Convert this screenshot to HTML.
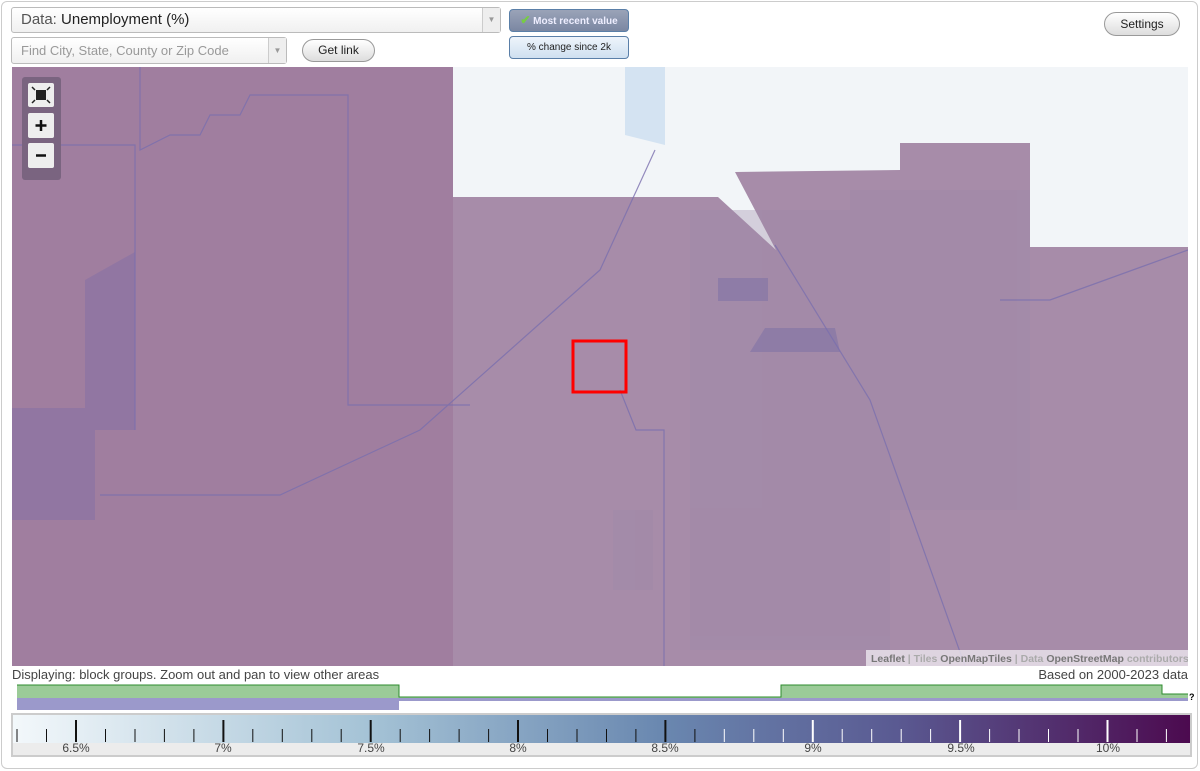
<!DOCTYPE html>
<html><head><meta charset="utf-8"><style>
*{box-sizing:border-box;margin:0;padding:0}
body{width:1200px;height:771px;background:#fff;font-family:"Liberation Sans",Arial,sans-serif;position:relative;overflow:hidden}
.frame{position:absolute;left:1px;top:1px;width:1197px;height:768px;border:1px solid #ccc;border-radius:6px}
.sel{position:absolute;border:1px solid #bbb;border-radius:3px;background:linear-gradient(#fff,#f0f0f0);color:#555}
.sel .arr{position:absolute;right:0;top:0;bottom:0;width:18px;border-left:1px solid #ccc;background:#eee;color:#999;font-size:8px;text-align:center}
.btn{position:absolute;border:1px solid #999;border-radius:12px;background:linear-gradient(#fff,#ddd);font-size:12px;text-align:center;color:#222}
.tog{position:absolute;border:1px solid #5a7fa8;border-radius:4px;font-size:10px;text-align:center}
</style></head><body>
<div class="frame"></div>
<div class="sel" style="left:11px;top:7px;width:490px;height:26px;font-size:15px;line-height:24px;padding-left:9px">Data: <span style="color:#222">Unemployment (%)</span><div class="arr" style="line-height:24px">▼</div></div>
<div class="sel" style="left:11px;top:37px;width:276px;height:27px;font-size:13px;line-height:25px;padding-left:9px;color:#999">Find City, State, County or Zip Code<div class="arr" style="line-height:25px">▼</div></div>
<div class="btn" style="left:302px;top:39px;width:73px;height:23px;line-height:21px">Get link</div>
<div class="tog" style="left:509px;top:9px;width:120px;height:23px;line-height:21px;background:linear-gradient(#9aa3b8,#7b87a2);color:#eef;font-weight:bold"><span style="color:#7c4;font-size:12px">✔</span> Most recent value</div>
<div class="tog" style="left:509px;top:36px;width:120px;height:23px;line-height:21px;background:linear-gradient(#eef4fb,#cfe0f0);color:#222">% change since 2k</div>
<div class="btn" style="left:1104px;top:12px;width:76px;height:24px;line-height:22px">Settings</div>

<svg style="position:absolute;left:12px;top:67px" width="1176" height="599" viewBox="12 67 1176 599">
<rect x="12" y="67" width="1176" height="599" fill="#a78ca9"/>
<rect x="12" y="67" width="441" height="599" fill="#a07e9f"/>
<polygon points="453,67 1188,67 1188,247 1030,247 1030,143 900,143 900,170 735,172 776,250 718,197 453,197" fill="#f2f5f8"/>
<polygon points="625,67 665,67 665,145 625,135" fill="#d4e3f2"/>
<polygon points="12,408 85,408 85,280 135,252 135,430 95,430 95,520 12,520" fill="#8a74a4" opacity=".7"/>
<rect x="718" y="278" width="50" height="23" fill="#8676a6"/>
<polygon points="750,352 765,328 835,328 840,352" fill="#8676a6"/>
<g fill="#9e89a8" opacity=".35"><rect x="690" y="210" width="200" height="440"/><rect x="850" y="190" width="180" height="320"/><rect x="613" y="510" width="40" height="80"/></g>
<g stroke="#7a6fae" stroke-width="1.2" fill="none" opacity=".8">
<path d="M140,67V150L170,135H200L210,115H240L250,95H348V405H470"/>
<path d="M12,145H135V430"/>
<path d="M655,150L600,270L420,430L280,495H100"/>
<path d="M620,390L636,430H664V666"/>
<path d="M775,245L870,400L965,666"/>
<path d="M1188,250L1050,300H1000"/>
</g>
<rect x="573" y="341" width="53" height="51" fill="none" stroke="#f00" stroke-width="3"/>
<rect x="22" y="77" width="39" height="103" rx="3" fill="#7a6480"/>
<rect x="28" y="83" width="26" height="24" rx="2" fill="#eee"/>
<rect x="36" y="90" width="10" height="10" fill="#222"/>
<path d="M32,87l3,3M50,87l-3,3M32,103l3,-3M50,103l-3,-3" stroke="#222" stroke-width="1.5"/>
<rect x="28" y="113" width="26" height="25" rx="2" fill="#eee"/>
<path d="M41,120V131M35.5,125.5H46.5" stroke="#111" stroke-width="2.5"/>
<rect x="28" y="143" width="26" height="25" rx="2" fill="#eee"/>
<path d="M36,155.5H46" stroke="#111" stroke-width="2.5"/>
<rect x="866" y="650" width="322" height="16" fill="#e8e0ea" opacity=".85"/>
<text x="871" y="662" font-size="10.5" font-family="Liberation Sans" font-weight="bold" fill="#777">Leaflet <tspan fill="#aaa">| Tiles </tspan>OpenMapTiles<tspan fill="#aaa"> | Data </tspan>OpenStreetMap<tspan fill="#aaa"> contributors</tspan></text>
</svg>

<div style="position:absolute;left:12px;top:667px;font-size:13px;color:#444">Displaying: block groups. Zoom out and pan to view other areas</div>
<div style="position:absolute;right:12px;top:667px;font-size:13px;color:#444">Based on 2000-2023 data</div>
<svg style="position:absolute;left:0;top:680px" width="1200" height="35">
<path d="M17,5H399V17H781V5H1162V14H1188V19H17Z" fill="#9bcb98"/>
<path d="M17,5H399V17H781V5H1162V14H1188" stroke="#2e8b2e" fill="none" stroke-width="1"/>
<rect x="17" y="18" width="382" height="12" fill="#9b99cb"/>
<rect x="399" y="18" width="789" height="3" fill="#9b99cb"/>
<text x="1189" y="20" font-size="9" font-weight="bold">?</text>
</svg>
<div style="position:absolute;left:11px;top:713px;width:1181px;height:44px;border:2px solid #ccc;background:#ececec"></div>
<svg style="position:absolute;left:13px;top:715px" width="1177" height="40">
<defs><linearGradient id="g"><stop offset="0" stop-color="#f3f8fb"/><stop offset=".3" stop-color="#a5c3d6"/><stop offset=".55" stop-color="#6a88b0"/><stop offset=".75" stop-color="#5a5a92"/><stop offset="1" stop-color="#4c0a4f"/></linearGradient></defs>
<rect width="1177" height="28" fill="url(#g)"/>
<path stroke="#111" stroke-width="1" d="M4,14V27M33.5,14V27M92.5,14V27M122,14V27M151.4,14V27M180.9,14V27M239.8,14V27M269.3,14V27M298.8,14V27M328.2,14V27M387.2,14V27M416.6,14V27M446.1,14V27M475.6,14V27M534.5,14V27M564,14V27M593.5,14V27M622.9,14V27M681.9,14V27"/>
<path stroke="#111" stroke-width="2" d="M63,5V27M210.4,5V27M357.7,5V27M505,5V27M652.4,5V27"/>
<path stroke="#fff" stroke-width="1" d="M711.3,14V27M740.8,14V27M770.3,14V27M829.2,14V27M858.7,14V27M888.2,14V27M917.6,14V27M976.6,14V27M1006,14V27M1035.5,14V27M1065,14V27M1124,14V27M1153.4,14V27"/>
<path stroke="#fff" stroke-width="2" d="M799.8,5V27M947.1,5V27M1094.5,5V27"/>
<g font-size="12" fill="#444" text-anchor="middle" font-family="Liberation Sans">
<text x="63" y="37">6.5%</text><text x="210" y="37">7%</text><text x="358" y="37">7.5%</text><text x="505" y="37">8%</text><text x="652" y="37">8.5%</text><text x="800" y="37">9%</text><text x="948" y="37">9.5%</text><text x="1095" y="37">10%</text></g>
</svg>
</body></html>
